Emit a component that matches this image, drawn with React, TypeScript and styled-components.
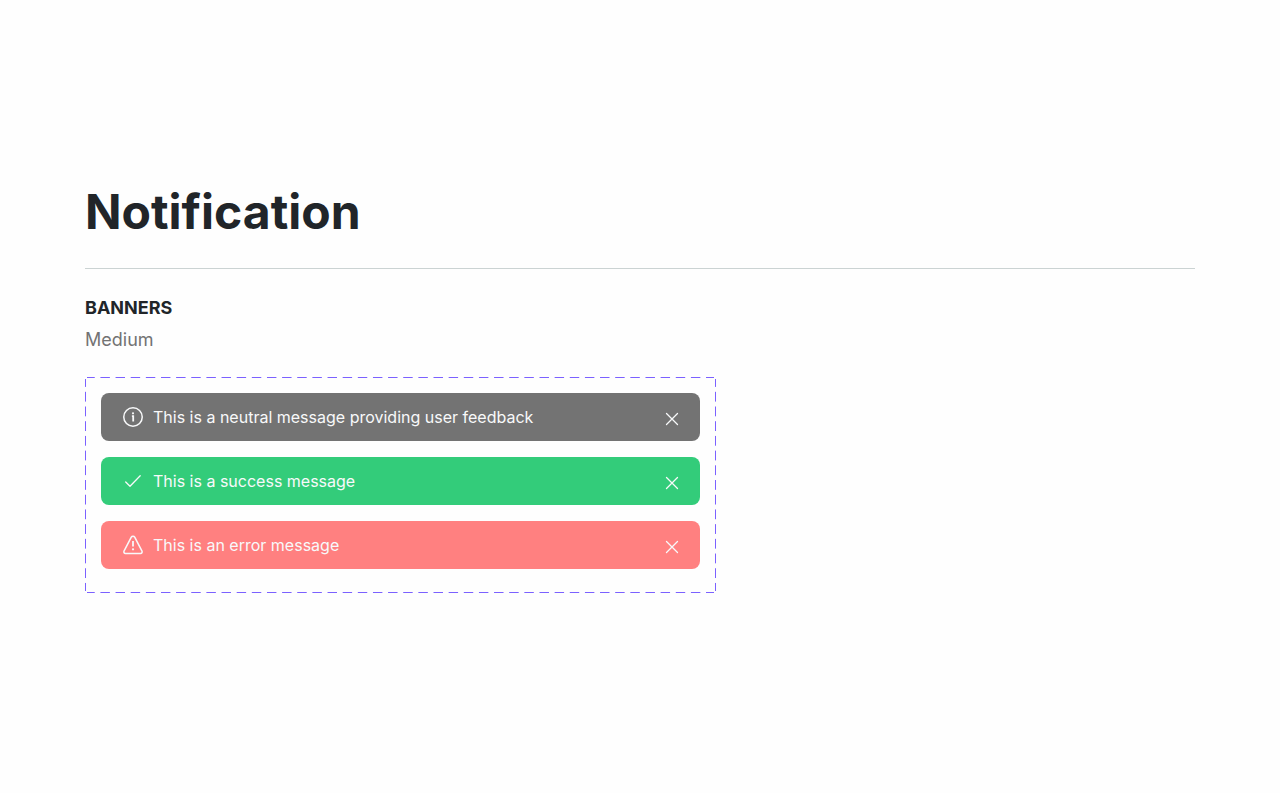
import React from "react";
import styled, { createGlobalStyle } from "styled-components";

const GlobalStyle = createGlobalStyle`
  *, *::before, *::after { box-sizing: border-box; }
  body {
    margin: 0;
    background: #fefefe;
    color: #212529;
    font-family: Inter, "Liberation Sans", sans-serif;
    font-optical-sizing: none;
  }
`;

const Page = styled.main`
  padding: 176px 85px 80px;
`;

const Header = styled.header`
  padding-bottom: 20px;
  border-bottom: 1px solid #cbd3d3;
`;

const Title = styled.h1`
  margin: 0;
  font-size: 48px;
  font-weight: 700;
  line-height: 72px;
`;

const SectionTitle = styled.h2`
  margin: 24px 0 0;
  font-size: 18px;
  font-weight: 700;
  line-height: 30px;
`;

const Size = styled.p`
  margin: 0;
  padding-top: 2px;
  color: #737373;
  font-size: 18px;
  font-weight: 400;
  line-height: 30px;
`;

/* Long dashes, fitted a whole number of times to each side. */
const dash = "#7b61ff 0 5px, transparent 5px 10px, #7b61ff 10px";

const Frame = styled.div`
  position: relative;
  display: flex;
  flex-direction: column;
  gap: 16px;
  max-width: 631px;
  margin-top: 22px;
  padding: 16px 16px 24px;

  &::before,
  &::after {
    content: "";
    position: absolute;
    pointer-events: none;
  }

  &::before {
    inset: 0 2px;
    padding: 0 3px;
    background:
      linear-gradient(to right, ${dash}) top left / 15px 1px round no-repeat content-box border-box,
      linear-gradient(to right, ${dash}) bottom left / 15px 1px round no-repeat content-box border-box;
  }

  &::after {
    inset: 2px 0;
    padding: 3px 0;
    background:
      linear-gradient(to bottom, ${dash}) top left / 1px 15px no-repeat round content-box border-box,
      linear-gradient(to bottom, ${dash}) top right / 1px 15px no-repeat round content-box border-box;
  }
`;

const tones = { neutral: "#737373", success: "#33cc7a", error: "#ff8080" };
type Tone = keyof typeof tones;

const Banner = styled.div<{ $tone: Tone }>`
  display: flex;
  align-items: center;
  gap: 8px;
  height: 48px;
  padding: 0 16px 0 20px;
  border-radius: 8px;
  background: ${({ $tone }) => tones[$tone]};
  color: #f8f9fa;
`;

const Message = styled.p`
  flex: 1;
  margin: 0;
  font-size: 16px;
  font-weight: 400;
  line-height: 24px;
`;

const Icon = styled.svg<{ $weight?: number }>`
  flex: none;
  width: 24px;
  height: 24px;
  fill: none;
  stroke: currentColor;
  stroke-width: ${({ $weight = 1.5 }) => $weight};
  stroke-linecap: round;
  stroke-linejoin: round;
`;

const CloseButton = styled.button`
  display: flex;
  padding: 4px 0 0;
  border: 0;
  background: none;
  color: inherit;
  cursor: pointer;
`;

const glyphs: Record<Tone, React.ReactNode> = {
  neutral: (
    <>
      <circle cx="12" cy="12" r="9.25" />
      <path d="M10.9 11.2h1.3v5.2" strokeWidth="1.8" strokeLinecap="butt" strokeLinejoin="miter" />
      <circle cx="12" cy="8.3" r="1.1" fill="currentColor" stroke="none" />
    </>
  ),
  success: <path d="M4.7 13l4.3 4.2L19.2 6.8" strokeWidth="1.3" />,
  error: (
    <>
      <path d="M10.3 4.2 3 18.2a1.6 1.6 0 0 0 1.5 2.3h15a1.6 1.6 0 0 0 1.5-2.3L13.7 4.2a1.9 1.9 0 0 0-3.4 0Z" />
      <path d="M12 8v5.5" strokeWidth="1.8" strokeLinecap="butt" />
      <circle cx="12" cy="16.3" r="1.1" fill="currentColor" stroke="none" />
    </>
  ),
};

const banners: { tone: Tone; text: string }[] = [
  { tone: "neutral", text: "This is a neutral message providing user feedback" },
  { tone: "success", text: "This is a success message" },
  { tone: "error", text: "This is an error message" },
];

export default function App() {
  return (
    <>
      <GlobalStyle />
      <Page>
        <Header>
          <Title>Notification</Title>
        </Header>
        <section>
          <SectionTitle>BANNERS</SectionTitle>
          <Size>Medium</Size>
          <Frame>
            {banners.map(({ tone, text }) => (
              <Banner key={tone} $tone={tone} role="status">
                <Icon viewBox="0 0 24 24" aria-hidden="true">
                  {glyphs[tone]}
                </Icon>
                <Message>{text}</Message>
                <CloseButton type="button" aria-label="Dismiss">
                  <Icon viewBox="0 0 24 24" $weight={1.3} aria-hidden="true">
                    <path d="M6.5 6.5l11 11M17.5 6.5l-11 11" />
                  </Icon>
                </CloseButton>
              </Banner>
            ))}
          </Frame>
        </section>
      </Page>
    </>
  );
}
